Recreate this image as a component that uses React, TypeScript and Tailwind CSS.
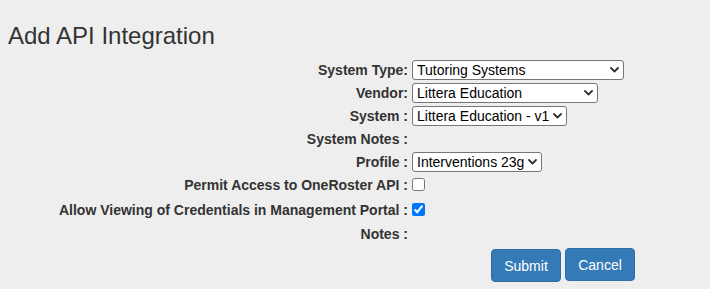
import React from "react";

function Chevron() {
  return (
    <svg
      className="pointer-events-none absolute right-[5px] top-1/2 -translate-y-1/2"
      width="9"
      height="6"
      viewBox="0 0 9 6"
      fill="none"
    >
      <path d="M1 1 L4.5 4.5 L8 1" stroke="#333" strokeWidth="1.8" strokeLinecap="round" strokeLinejoin="round" />
    </svg>
  );
}

function Select({ width, value }: { width: string; value: string }) {
  return (
    <div className="relative inline-block">
      <select
        defaultValue={value}
        className={`${width} h-[20px] appearance-none rounded-[3px] border border-[#767676] bg-white pl-[4px] pr-[16px] text-[14px] leading-[18px] text-black font-['Liberation_Sans',Arial,sans-serif] outline-none`}
      >
        <option value={value}>{value}</option>
      </select>
      <Chevron />
    </div>
  );
}

function Row({ label, h, children }: { label: string; h: string; children?: React.ReactNode }) {
  return (
    <div className={`flex items-center ${h}`}>
      <div className="w-[408px] text-right text-[14px] font-bold leading-[20px] text-[#333]">{label}</div>
      <div className="flex items-center pl-1">{children}</div>
    </div>
  );
}

export default function App() {
  return (
    <div className="min-h-screen bg-[#eeeeee] pt-[23px] font-['Liberation_Sans',Arial,sans-serif] text-[#333]">
      <h3 className="mb-[9px] pl-[8px] text-[24px] font-normal leading-[26px] text-[#333]">Add API Integration</h3>
      <div className="flex flex-col">
        <Row label="System Type:" h="h-[23px]">
          <Select width="w-[212px]" value="Tutoring Systems" />
        </Row>
        <Row label="Vendor:" h="h-[23px]">
          <Select width="w-[186px]" value="Littera Education" />
        </Row>
        <Row label="System :" h="h-[23px]">
          <Select width="w-[155px]" value="Littera Education - v1" />
        </Row>
        <Row label="System Notes :" h="h-[23px]" />
        <Row label="Profile :" h="h-[23px]">
          <Select width="w-[130px]" value="Interventions 23g" />
        </Row>
        <Row label="Permit Access to OneRoster API :" h="h-[23px]">
          <input type="checkbox" className="m-0 h-[13px] w-[13px]" />
        </Row>
        <Row label="Allow Viewing of Credentials in Management Portal :" h="h-[27px]">
          <input type="checkbox" defaultChecked className="m-0 h-[13px] w-[13px] accent-[#0075ff]" />
        </Row>
        <Row label="Notes :" h="h-[21px]" />
        <div className="mt-[4px] flex items-start pl-[491px]">
          <button className="mt-px h-[33px] w-[70px] rounded-[4px] border border-[#2e6da4] bg-[#337ab7] text-[14px] leading-[20px] text-white">
            Submit
          </button>
          <button className="ml-[4px] h-[33px] w-[70px] rounded-[4px] border border-[#2e6da4] bg-[#337ab7] text-[14px] leading-[20px] text-white">
            Cancel
          </button>
        </div>
      </div>
    </div>
  );
}
